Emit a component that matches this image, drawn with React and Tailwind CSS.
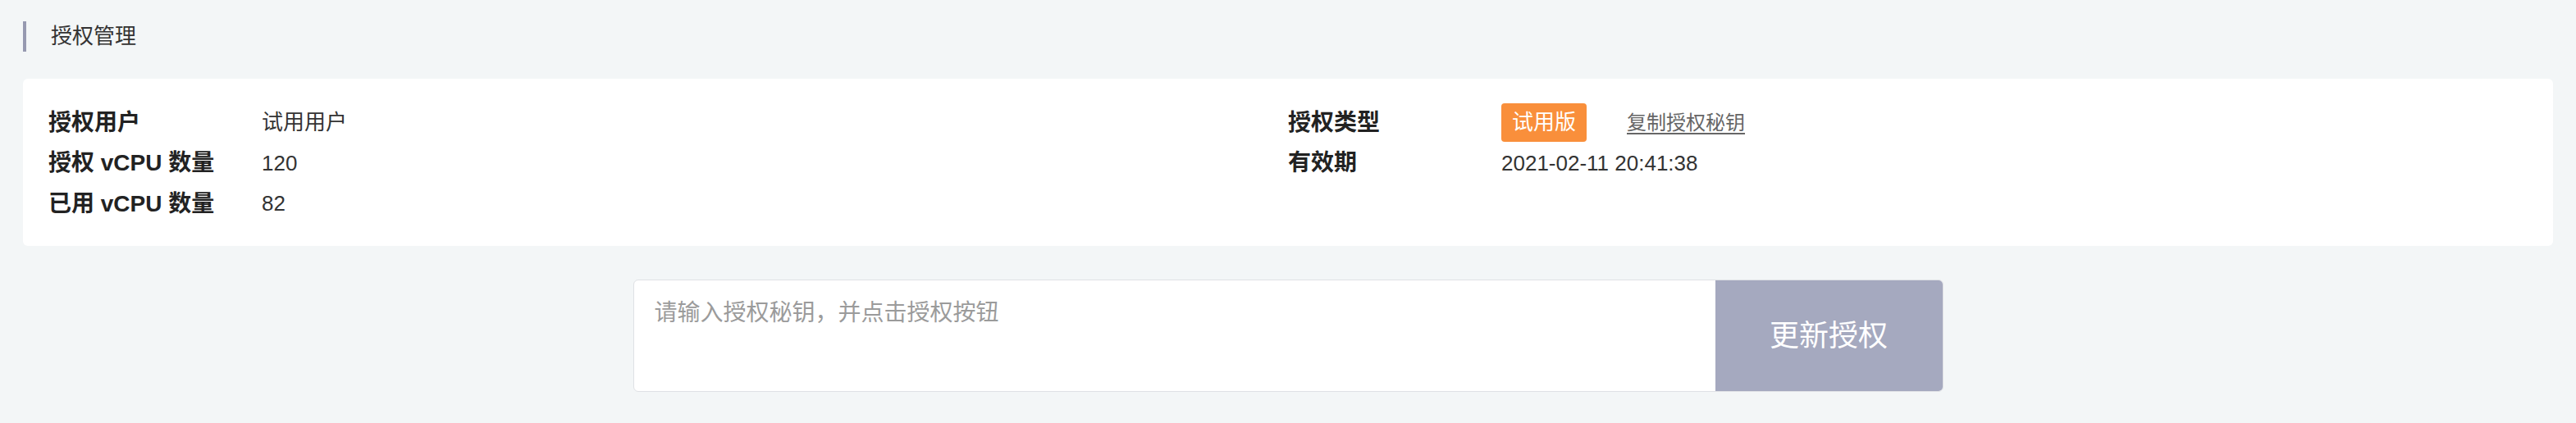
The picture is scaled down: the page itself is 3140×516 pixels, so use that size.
import React, { useState } from "react";

const FONT = "font-['Liberation_Sans','Noto_Sans_CJK_SC',sans-serif]";

const leftRows = [
  { label: "授权用户", value: "试用用户" },
  { label: "授权 vCPU 数量", value: "120" },
  { label: "已用 vCPU 数量", value: "82" },
];

function InfoRow({ label, children }) {
  return (
    <div className="flex h-[49.5px] items-center">
      <div className="w-[260px] shrink-0 text-[28px] font-bold text-[#222]">{label}</div>
      <div className="flex items-center text-[26px] text-[#333]">{children}</div>
    </div>
  );
}

export default function App() {
  const [key, setKey] = useState("");

  return (
    <div className={`h-[516px] w-full bg-[#f3f6f7] px-[28px] pt-[26px] ${FONT}`}>
      {/* ---------------- Title ---------------- */}
      <div className="flex h-[37px] items-center border-l-4 border-[#9699b0] pl-[30px] text-[26px] text-[#333]">
        授权管理
      </div>

      {/* ---------------- License info ---------------- */}
      <section className="mt-[33px] grid h-[204px] grid-cols-2 rounded-md bg-white px-[31px] pt-[29px]">
        <div>
          {leftRows.map((r) => (
            <InfoRow key={r.label} label={r.label}>
              {r.value}
            </InfoRow>
          ))}
        </div>
        <div>
          <InfoRow label="授权类型">
            <span className="flex h-[47px] items-center rounded bg-[#f98f3b] px-[13px] text-[26px] text-white">
              试用版
            </span>
            <a href="#" className="ml-[49px] text-[24px] text-[#666] underline underline-offset-4">
              复制授权秘钥
            </a>
          </InfoRow>
          <InfoRow label="有效期">2021-02-11 20:41:38</InfoRow>
        </div>
      </section>

      {/* ---------------- Update form ---------------- */}
      <div className="mt-[41px] flex justify-center">
        <div className="flex h-[137px] w-[1597px] overflow-hidden rounded-md border border-[#dfe1e5] bg-white">
          <textarea
            value={key}
            onChange={(e) => setKey(e.target.value)}
            placeholder="请输入授权秘钥，并点击授权按钮"
            className="flex-1 resize-none px-[25px] pt-[19px] text-[28px] text-[#333] outline-none placeholder:text-[#9b9b9b]"
          />
          <button className="w-[277px] shrink-0 bg-[#a5a9bf] text-[36px] text-white">更新授权</button>
        </div>
      </div>
    </div>
  );
}
